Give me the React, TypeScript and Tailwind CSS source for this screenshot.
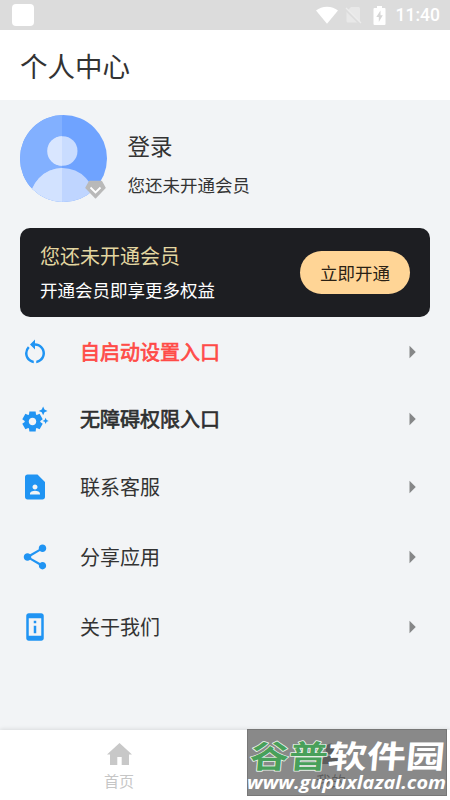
// 个人中心 page: profile header, membership card, settings menu and bottom tabs.
import type { IconType } from "react-icons";
import {
  MdArrowRight,
  MdContactPage,
  MdPermDeviceInformation,
  MdRestartAlt,
  MdSettingsSuggest,
  MdShare,
} from "react-icons/md";

type MenuItem = {
  label: string;
  icon: IconType;
  rowClass: string;
  textClass: string;
};

const MENU: MenuItem[] = [
  {
    label: "自启动设置入口",
    icon: MdRestartAlt,
    rowClass: "h-[68px]",
    textClass: "text-[#ff4b47] [-webkit-text-stroke:0.7px_#ff4b47]",
  },
  {
    label: "无障碍权限入口",
    icon: MdSettingsSuggest,
    rowClass: "h-[67px]",
    textClass: "text-[#2e2f30] [-webkit-text-stroke:0.7px_#2e2f30]",
  },
  { label: "联系客服", icon: MdContactPage, rowClass: "h-[68px]", textClass: "text-[#333]" },
  { label: "分享应用", icon: MdShare, rowClass: "h-[72px]", textClass: "text-[#333]" },
  { label: "关于我们", icon: MdPermDeviceInformation, rowClass: "h-[68px]", textClass: "text-[#333]" },
];

function StatusBar() {
  return (
    <div className="flex h-[30px] shrink-0 items-center bg-[#dcdcdc] pl-3 pr-[10px] text-white">
      <div className="size-[22px] rounded-[4px] bg-white" />
      <div className="ml-auto flex items-center">
        <svg className="mr-[7px] h-[18px] w-[22px]" viewBox="0 0 22 18" fill="currentColor">
          <path d="M0 4.500C3 2 6.700.700 11 .700S19 2 22 4.500L11 17.700z" />
        </svg>
        <svg className="mr-[11px] h-[18px] w-[17px]" viewBox="0 0 17 18">
          <path d="M6 1h7.500a1.500 1.500 0 0 1 1.500 1.500V15a1.500 1.500 0 0 1-1.500 1.500H3A1.500 1.500 0 0 1 1.500 15V5.500z" fill="#e8e8e8" />
          <path d="M0 3 14.500 17.500" stroke="#dcdcdc" strokeWidth="2" />
          <path d="M1 2 16 17" stroke="#ececec" strokeWidth="1.200" />
        </svg>
        <svg className="mr-[10px] h-[19px] w-[13px]" viewBox="0 0 13 19">
          <path d="M4 0h5v2h2.500a1 1 0 0 1 1 1v15a1 1 0 0 1-1 1h-10a1 1 0 0 1-1-1V3a1 1 0 0 1 1-1H4z" fill="#fff" />
          <path d="M7.500 4.500 3.300 11h2.500v5l4-6.800H7.500z" fill="#d6d6d6" />
        </svg>
        <span className="pt-[2px] font-['Roboto',sans-serif] text-[17.5px] font-medium leading-none">11:40</span>
      </div>
    </div>
  );
}

function Avatar() {
  return (
    <div className="relative size-[87px] shrink-0">
      <svg className="size-full" viewBox="0 0 87 87">
        <defs>
          <clipPath id="avatar-clip">
            <circle cx="43.500" cy="43.500" r="43.500" />
          </clipPath>
        </defs>
        <g clipPath="url(#avatar-clip)">
          <path d="M0 0h87v87H0z" fill="#6fa3ff" />
          <path d="M0 0h42v87H0z" fill="#82b0ff" />
          <circle cx="42.700" cy="36" r="14.800" fill="#c9dcff" />
          <path d="M42 21.200a14.800 14.800 0 0 0 0 29.600z" fill="#d9e6ff" />
          <ellipse cx="42.500" cy="87" rx="33" ry="34" fill="#bfd5ff" />
          <path d="M42 53A33 34 0 0 0 9.500 87H42z" fill="#d2e2ff" />
        </g>
      </svg>
      <svg className="absolute left-[65px] top-[65px] h-[19px] w-[21px]" viewBox="0 0 21 19">
        <path d="M4.500 1.500h12L20 7.800 10.500 17.700 1 7.800z" fill="#b9b9b9" stroke="#b9b9b9" strokeWidth="1.500" strokeLinejoin="round" />
        <path d="m5.500 7.500 5 5 5-5" fill="none" stroke="#fff" strokeWidth="1.800" />
      </svg>
    </div>
  );
}

function MemberCard() {
  return (
    <section className="mx-5 mt-[0.5px] flex h-[89px] items-center rounded-[10px] bg-[#1d1e22] px-5">
      <div className="flex-1 pt-px">
        <h2 className="text-[20px] leading-[34px] text-[#e3d6a0]">您还未开通会员</h2>
        <p className="text-[17.5px] leading-[33px] text-white">开通会员即享更多权益</p>
      </div>
      <button className="h-[43px] w-[110px] rounded-full bg-[#ffd596] pt-[2px] text-[17.5px] text-[#2a2114]">
        立即开通
      </button>
    </section>
  );
}

function MenuRow({ label, icon: Icon, rowClass, textClass }: MenuItem) {
  return (
    <li className={`flex items-center pl-5 pr-[23px] ${rowClass}`}>
      <Icon className="size-[30px] text-[#2094f3]" />
      <span className={`ml-[30px] flex-1 text-[20px] leading-[30px] ${textClass}`}>{label}</span>
      <MdArrowRight className="size-[30px] text-[#868788]" />
    </li>
  );
}

function TabBar() {
  return (
    <nav className="relative flex h-[70px] shrink-0 bg-white px-[13px] text-[15px] leading-[22px] text-[#c6c6c6] shadow-[0_-1px_4px_rgba(0,0,0,0.1)]">
      <div className="flex flex-1 flex-col items-center pt-[13px]">
        <svg className="h-[22px] w-[25px]" viewBox="0 0 25 22" fill="#c8c8c8">
          <path d="M12.500 0 25 11.500h-3V22h-7.300v-8h-4.400v8H3V11.500H0z" />
        </svg>
        <span className="mt-[5px]">首页</span>
      </div>
      <div className="flex flex-1 flex-col items-center pt-[13px] text-[#222]">
        <svg className="h-[22px] w-[22px]" viewBox="0 0 22 22" fill="#222">
          <circle cx="11" cy="6" r="5.500" />
          <path d="M0 21c0-5.500 5-8 11-8s11 2.500 11 8z" />
        </svg>
        <span className="mt-[5px]">我的</span>
      </div>
      <Watermark />
    </nav>
  );
}

function Watermark() {
  return (
    <div className="absolute left-[247px] top-[-1px] h-[67px] w-[200px] border border-[#777] bg-[#6c6c6c]/80">
      <svg className="-ml-px -mt-px block h-[67px] w-[200px] overflow-visible" viewBox="0 0 200 67">
        <g
          fontFamily="'Noto Sans CJK SC', sans-serif"
          fontSize="39"
          transform="translate(4 38.5) skewX(-5) scale(1 0.81)"
          strokeLinejoin="round"
          paintOrder="stroke"
        >
          <text x="-2" fill="#48a05a" stroke="#e6efe7" strokeWidth="2" fontWeight="700">谷普</text>
          <text x="76" fill="#fff" fontWeight="700">软件园</text>
        </g>
        <text
          x="0"
          y="60"
          fill="#fff"
          fontFamily="'Open Sans', sans-serif"
          fontSize="18.500"
          fontStyle="italic"
          fontWeight="700"
          textLength="199"
          lengthAdjust="spacingAndGlyphs"
        >
          www.gupuxlazal.com
        </text>
      </svg>
    </div>
  );
}

export default function App() {
  return (
    <div className="flex h-[800px] w-[450px] flex-col overflow-hidden bg-[#f2f4f6] font-['Noto_Sans_CJK_SC',sans-serif] text-[#333]">
      <StatusBar />
      <header className="flex h-[70px] shrink-0 items-center bg-white px-5">
        <h1 className="text-[27.5px] leading-[40px]">个人中心</h1>
      </header>
      <main className="flex-1">
        <section className="flex h-[127px] px-5 pt-[15px]">
          <Avatar />
          <div className="ml-[20.5px] pt-[13px]">
            <p className="text-[22.5px] leading-[35px]">登录</p>
            <p className="mt-[7px] text-[17.5px] leading-[30px]">您还未开通会员</p>
          </div>
        </section>
        <MemberCard />
        <ul className="pt-[1px]">
          {MENU.map((item) => (
            <MenuRow key={item.label} {...item} />
          ))}
        </ul>
      </main>
      <TabBar />
    </div>
  );
}
